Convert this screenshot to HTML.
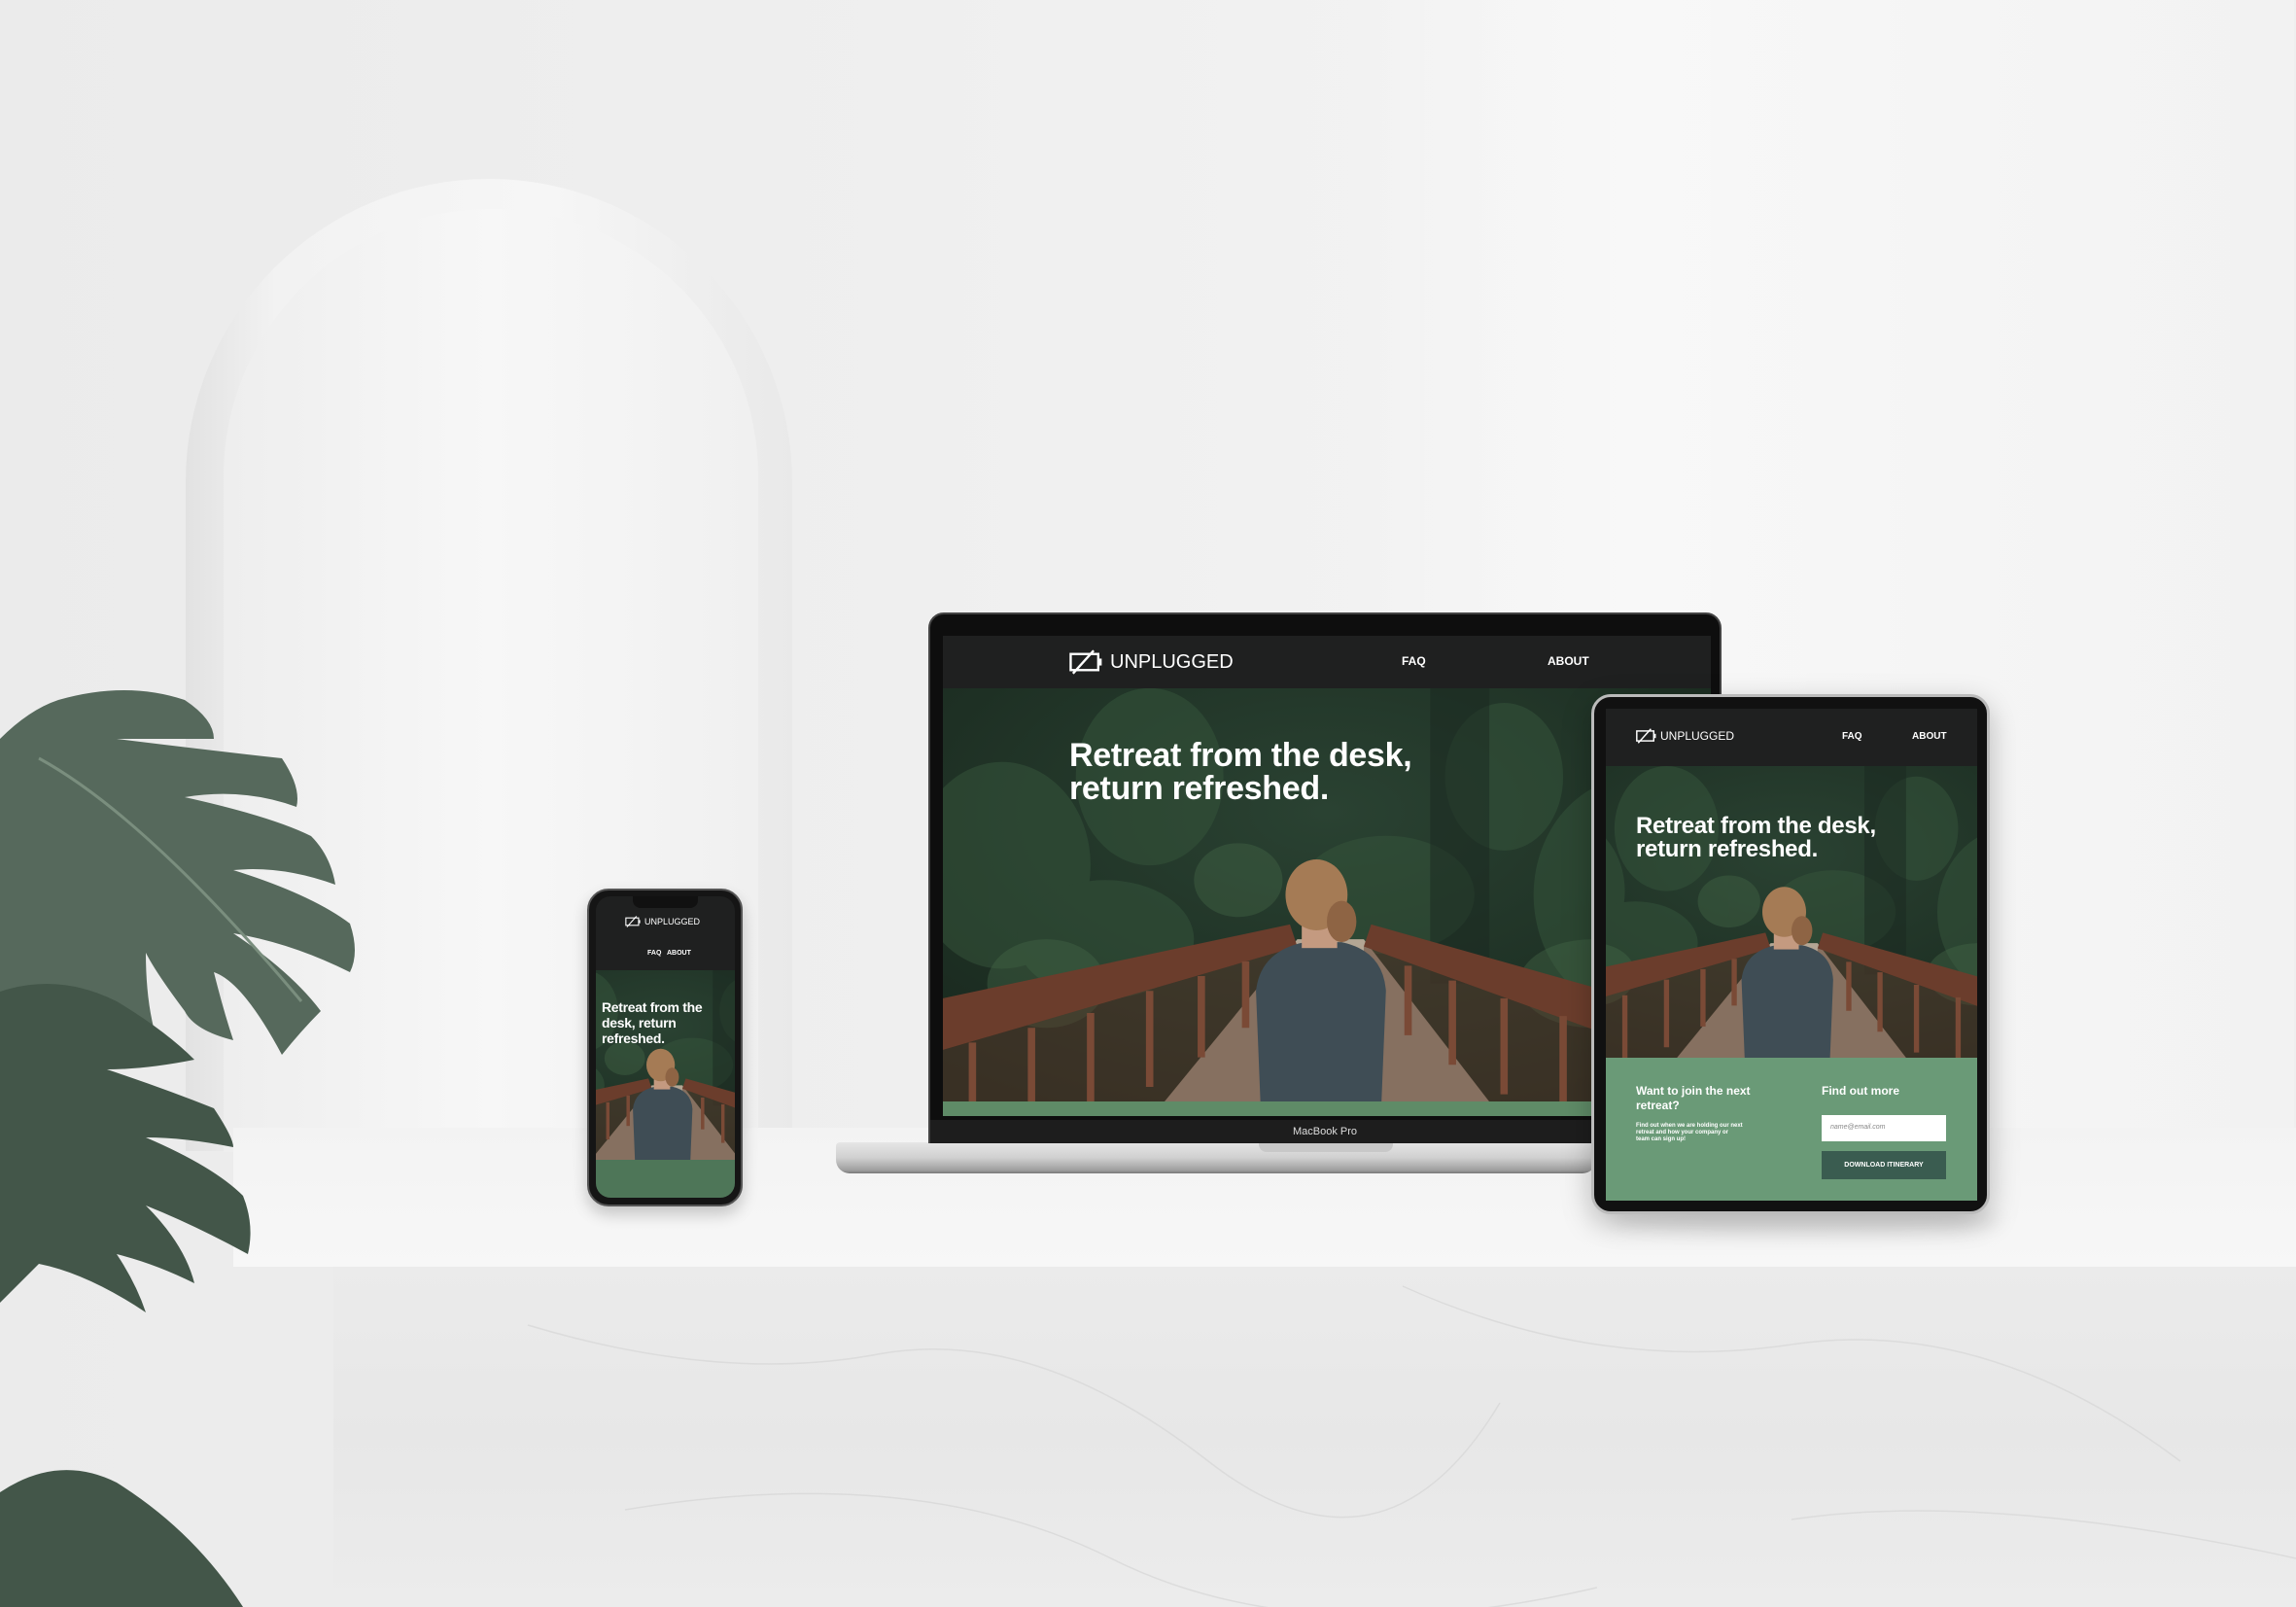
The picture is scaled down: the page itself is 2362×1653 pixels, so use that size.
<!DOCTYPE html>
<html><head><meta charset="utf-8"><style>
*{margin:0;padding:0;box-sizing:border-box}
body{width:2362px;height:1653px;overflow:hidden;position:relative;background:linear-gradient(90deg,#ebebeb 0%,#efefef 40%,#f3f3f3 70%,#efefef 100%);font-family:"Liberation Sans","DejaVu Sans",sans-serif}
.abs{position:absolute}
.nav{background:#1f2020;color:#fff}
.hero{overflow:hidden;position:relative}
.hero svg{position:absolute;left:0;top:0;width:100%;height:100%}
.h1{position:absolute;color:#fff;font-weight:bold;letter-spacing:-0.3px;line-height:1.0}
.logo{display:flex;align-items:center;gap:6px;color:#fff}
</style></head><body>
<svg width="0" height="0" style="position:absolute">
<defs>
<radialGradient id="fg" cx="0.5" cy="0.3" r="0.8"><stop offset="0" stop-color="#2a4232"/><stop offset="1" stop-color="#18271d"/></radialGradient>
<symbol id="hero" viewBox="0 0 520 280" preserveAspectRatio="xMidYMid slice">
<rect width="520" height="280" fill="url(#fg)"/>
<g fill="#35543b" opacity="0.55">
<ellipse cx="40" cy="120" rx="60" ry="70"/><ellipse cx="140" cy="60" rx="50" ry="60"/><ellipse cx="470" cy="140" rx="70" ry="80"/><ellipse cx="380" cy="60" rx="40" ry="50"/><ellipse cx="300" cy="140" rx="60" ry="40"/><ellipse cx="110" cy="170" rx="60" ry="40"/>
</g>
<g fill="#456a48" opacity="0.4"><ellipse cx="70" cy="200" rx="40" ry="30"/><ellipse cx="440" cy="200" rx="50" ry="30"/><ellipse cx="200" cy="130" rx="30" ry="25"/></g>
<rect x="330" y="0" width="40" height="200" fill="#1a2820" opacity="0.5"/>
<polygon points="150,280 370,280 285,170 240,170" fill="#b3a694"/>
<polygon points="0,210 235,160 240,175 0,245" fill="#6b3d2c"/>
<polygon points="0,245 240,175 240,280 0,280" fill="#5a3a2c" opacity="0.5"/>
<g stroke="#7a4a36" stroke-width="5"><line x1="20" y1="240" x2="20" y2="280"/><line x1="60" y1="230" x2="60" y2="280"/><line x1="100" y1="220" x2="100" y2="280"/><line x1="140" y1="205" x2="140" y2="270"/><line x1="175" y1="195" x2="175" y2="250"/><line x1="205" y1="185" x2="205" y2="230"/></g>
<polygon points="520,225 290,160 285,175 520,260" fill="#6b3d2c"/>
<polygon points="520,260 285,175 285,280 520,280" fill="#5a3a2c" opacity="0.5"/>
<g stroke="#7a4a36" stroke-width="5"><line x1="500" y1="250" x2="500" y2="280"/><line x1="460" y1="235" x2="460" y2="280"/><line x1="420" y1="222" x2="420" y2="280"/><line x1="380" y1="210" x2="380" y2="275"/><line x1="345" y1="198" x2="345" y2="255"/><line x1="315" y1="188" x2="315" y2="235"/></g>
<path d="M215,280 L212,205 Q215,178 245,172 L270,172 Q298,178 300,205 L297,280 Z" fill="#3f4d55"/>
<rect x="243" y="158" width="24" height="18" fill="#c49a80"/>
<ellipse cx="253" cy="140" rx="21" ry="24" fill="#a57b55"/>
<ellipse cx="270" cy="158" rx="10" ry="14" fill="#8e6444"/>
</symbol>
<symbol id="logo" viewBox="0 0 30 22"><rect x="1" y="4" width="24" height="14" fill="none" stroke="#fff" stroke-width="2"/><rect x="25" y="8" width="3" height="6" fill="#fff"/><line x1="3" y1="21" x2="21" y2="1" stroke="#fff" stroke-width="2"/></symbol>
</defs></svg>

<!-- arch -->
<div class="abs" style="left:191px;top:184px;width:624px;height:1000px;border-radius:312px 312px 0 0;background:linear-gradient(90deg,#e2e2e2 0%,#f2f2f2 15%,#f6f6f6 60%,#e9e9e9 100%)"></div>
<div class="abs" style="left:230px;top:215px;width:550px;height:970px;border-radius:275px 275px 0 0;background:linear-gradient(90deg,#eeeeee,#f7f7f7 50%,#f0f0f0)"></div>
<div class="abs" style="left:1380px;top:0;width:980px;height:1160px;background:linear-gradient(90deg,rgba(255,255,255,0) 0%,rgba(255,255,255,.4) 30%,rgba(255,255,255,.2) 100%)"></div>

<!-- marble -->
<div class="abs" style="left:240px;top:1160px;width:2122px;height:143px;background:linear-gradient(180deg,#f3f3f3,#f7f7f7)"></div>
<div class="abs" style="left:343px;top:1303px;width:2019px;height:350px;background:linear-gradient(180deg,#ebebeb,#e7e7e7 50%,#ececec)"></div>
<svg class="abs" style="left:343px;top:1303px" width="2019" height="350"><g fill="none" stroke="#d6d6d6" stroke-width="1.5" opacity="0.7"><path d="M200,60 Q400,120 560,90 T900,200 T1200,140"/><path d="M1100,20 Q1300,110 1500,80 T1900,200"/><path d="M300,250 Q600,200 800,300 T1300,330"/><path d="M1500,260 Q1700,230 2019,300"/></g></svg>
<div class="abs" style="left:1660px;top:1240px;width:400px;height:30px;border-radius:50%;background:rgba(0,0,0,.06);filter:blur(8px)"></div>

<!-- leaves -->
<svg class="abs" style="left:0;top:700px" width="380" height="660" viewBox="0 0 380 660">
<path d="M0,60 Q30,30 60,20 Q130,0 190,20 Q220,40 220,60 Q160,60 120,60 Q200,70 290,80 Q310,110 305,130 Q250,110 190,120 Q280,140 320,160 Q340,180 345,210 Q290,190 240,195 Q320,220 360,250 Q370,280 360,300 Q300,270 240,260 Q300,300 330,340 Q310,360 290,385 Q250,310 220,300 Q230,340 240,370 Q200,360 190,340 Q160,300 150,280 Q150,340 165,380 L0,380 Z" fill="#56695c"/>
<path d="M0,320 Q60,300 120,330 Q170,360 200,390 Q150,400 110,400 Q170,420 220,440 Q240,470 240,480 Q190,470 150,470 Q220,500 250,530 Q262,560 255,590 Q200,560 150,540 Q190,580 200,620 Q160,600 120,590 Q140,620 150,650 Q90,610 40,600 Q20,620 0,640 Z" fill="#435649"/>
<path d="M40,80 Q150,140 310,330" stroke="#7a8e7e" stroke-width="3" fill="none"/>
</svg>
<svg class="abs" style="left:0;top:1495px" width="260" height="158" viewBox="0 0 260 158"><path d="M0,40 Q60,0 120,30 Q200,80 250,158 L0,158 Z" fill="#435649"/></svg>

<!-- laptop base -->
<div class="abs" style="left:860px;top:1175px;width:782px;height:32px;border-radius:4px 4px 14px 14px;background:linear-gradient(180deg,#e6e6e6,#d0d0d0 50%,#9e9e9e 90%,#777)"></div>
<div class="abs" style="left:1295px;top:1175px;width:138px;height:10px;border-radius:0 0 8px 8px;background:#c8c8c8"></div>
<div class="abs" style="left:955px;top:630px;width:816px;height:546px;background:#0e0e0e;border-radius:16px 16px 0 0;border:2px solid #444"></div>
<div class="abs" style="left:957px;top:1152px;width:812px;height:24px;background:#1d1d1d;color:#ddd;font-size:11px;text-align:center;line-height:24px">MacBook Pro</div>
<div class="abs" style="left:970px;top:654px;width:790px;height:494px;background:#000;overflow:hidden">
 <div class="nav abs" style="left:0;top:0;width:790px;height:54px">
  <div class="logo abs" style="left:130px;top:14px;font-size:20px"><svg width="36" height="26"><use href="#logo"/></svg>UNPLUGGED</div>
  <div class="abs" style="left:472px;top:19px;font-size:12px;font-weight:bold">FAQ</div>
  <div class="abs" style="left:622px;top:19px;font-size:12px;font-weight:bold">ABOUT</div>
 </div>
 <div class="hero abs" style="left:0;top:54px;width:790px;height:425px"><svg><use href="#hero"/></svg>
  <div class="h1" style="left:130px;top:52px;font-size:34px">Retreat from the desk,<br>return refreshed.</div></div>
 <div class="abs" style="left:0;top:479px;width:790px;height:15px;background:#5f8b67"></div>
</div>

<!-- tablet -->
<div class="abs" style="left:1637px;top:714px;width:410px;height:535px;background:#111;border-radius:20px;border:3px solid #bbb;box-shadow:0 10px 30px rgba(0,0,0,.25)"></div>
<div class="abs" style="left:1652px;top:729px;width:382px;height:506px;background:#000;overflow:hidden">
 <div class="nav abs" style="left:0;top:0;width:382px;height:59px">
  <div class="logo abs" style="left:31px;top:20px;font-size:12px;gap:3px"><svg width="22" height="16"><use href="#logo"/></svg>UNPLUGGED</div>
  <div class="abs" style="left:243px;top:23px;font-size:10px;font-weight:bold">FAQ</div>
  <div class="abs" style="left:315px;top:23px;font-size:10px;font-weight:bold">ABOUT</div>
 </div>
 <div class="hero abs" style="left:0;top:59px;width:382px;height:300px"><svg><use href="#hero"/></svg>
  <div class="h1" style="left:31px;top:50px;font-size:24px">Retreat from the desk,<br>return refreshed.</div></div>
 <div class="abs" style="left:0;top:359px;width:382px;height:147px;background:#6a9a77;color:#fff">
  <div class="abs" style="left:31px;top:27px;font-size:12px;font-weight:bold;line-height:15px">Want to join the next<br>retreat?</div>
  <div class="abs" style="left:31px;top:67px;font-size:6px;font-weight:bold;line-height:7px">Find out when we are holding our next<br>retreat and how your company or<br>team can sign up!</div>
  <div class="abs" style="left:222px;top:27px;font-size:12px;font-weight:bold">Find out more</div>
  <div class="abs" style="left:222px;top:59px;width:128px;height:27px;background:#fff;color:#888;font-size:7px;font-style:italic;padding:9px 9px">name@email.com</div>
  <div class="abs" style="left:222px;top:96px;width:128px;height:29px;background:#3a5c50;font-size:7px;font-weight:bold;text-align:center;line-height:29px">DOWNLOAD ITINERARY</div>
 </div>
</div>

<!-- phone -->
<div class="abs" style="left:604px;top:914px;width:160px;height:327px;background:#151515;border-radius:22px;border:2px solid #555;box-shadow:0 8px 16px rgba(0,0,0,.2)"></div>
<div class="abs" style="left:613px;top:922px;width:143px;height:310px;background:#1f2020;border-radius:15px;overflow:hidden">
 <div class="abs" style="left:38px;top:0;width:67px;height:12px;background:#111;border-radius:0 0 8px 8px"></div>
 <div class="logo abs" style="left:30px;top:20px;font-size:9px;gap:3px"><svg width="17" height="12"><use href="#logo"/></svg>UNPLUGGED</div>
 <div class="abs" style="left:53px;top:55px;font-size:7px;font-weight:bold;color:#fff">FAQ &nbsp; ABOUT</div>
 <div class="hero abs" style="left:0;top:76px;width:143px;height:195px"><svg><use href="#hero"/></svg>
  <div class="h1" style="left:6px;top:30px;font-size:14px;line-height:16px">Retreat from the<br>desk, return<br>refreshed.</div></div>
 <div class="abs" style="left:0;top:271px;width:143px;height:39px;background:#4e7658"></div>
</div>
</body></html>
